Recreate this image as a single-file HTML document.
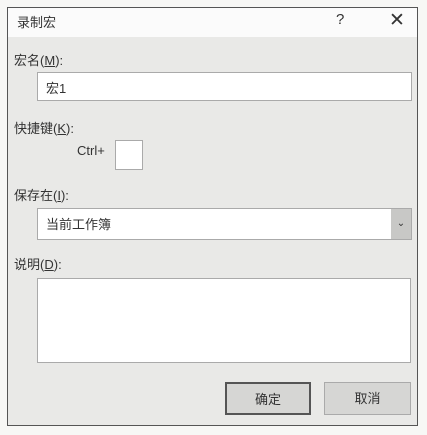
<!DOCTYPE html>
<html><head><meta charset="utf-8"><style>
*{margin:0;padding:0;box-sizing:border-box}
body{width:427px;height:435px;background:#f7f7f5;position:relative;overflow:hidden;font-family:"Liberation Sans","Noto Sans CJK SC",sans-serif;color:#333;font-size:13px}
.dlg{position:absolute;left:7px;top:7px;width:411px;height:419px;border:1px solid #555;background:#e9e9e7}
.title{position:absolute;left:0;top:0;width:409px;height:29px;background:#fbfbfb}
.a{position:absolute;white-space:nowrap}
.box{position:absolute;background:#fff;border:1px solid #aaa}
.btn{position:absolute;background:#d6d6d4;border:1px solid #aaa;text-align:center;line-height:31px;font-size:13px}
u{text-decoration:underline}
</style></head><body>
<div class="dlg">
<div class="title"></div>
<div class="a" style="left:9px;top:4px">录制宏</div>
<div class="a" style="left:328px;top:3px;font-size:15px">?</div>
<div class="a" style="left:381px;top:1px;font-size:19px;font-weight:300">✕</div>
<div class="a" style="left:6px;top:42px">宏名(<u>M</u>):</div>
<div class="box" style="left:29px;top:64px;width:375px;height:29px"></div>
<div class="a" style="left:38px;top:70px">宏1</div>
<div class="a" style="left:6px;top:110px">快捷键(<u>K</u>):</div>
<div class="a" style="left:69px;top:135px">Ctrl+</div>
<div class="box" style="left:107px;top:132px;width:28px;height:30px"></div>
<div class="a" style="left:6px;top:177px">保存在(<u>I</u>):</div>
<div class="box" style="left:29px;top:200px;width:375px;height:32px"></div>
<div class="a" style="left:38px;top:206px">当前工作簿</div>
<div class="a" style="left:383px;top:201px;width:20px;height:30px;background:#c8c8c6;text-align:center;line-height:30px;font-size:10px">⌄</div>
<div class="a" style="left:6px;top:246px">说明(<u>D</u>):</div>
<div class="box" style="left:29px;top:270px;width:374px;height:85px"></div>
<div class="btn" style="left:217px;top:374px;width:86px;height:33px;border:2px solid #555">确定</div>
<div class="btn" style="left:316px;top:374px;width:87px;height:33px">取消</div>
</div>
</body></html>
